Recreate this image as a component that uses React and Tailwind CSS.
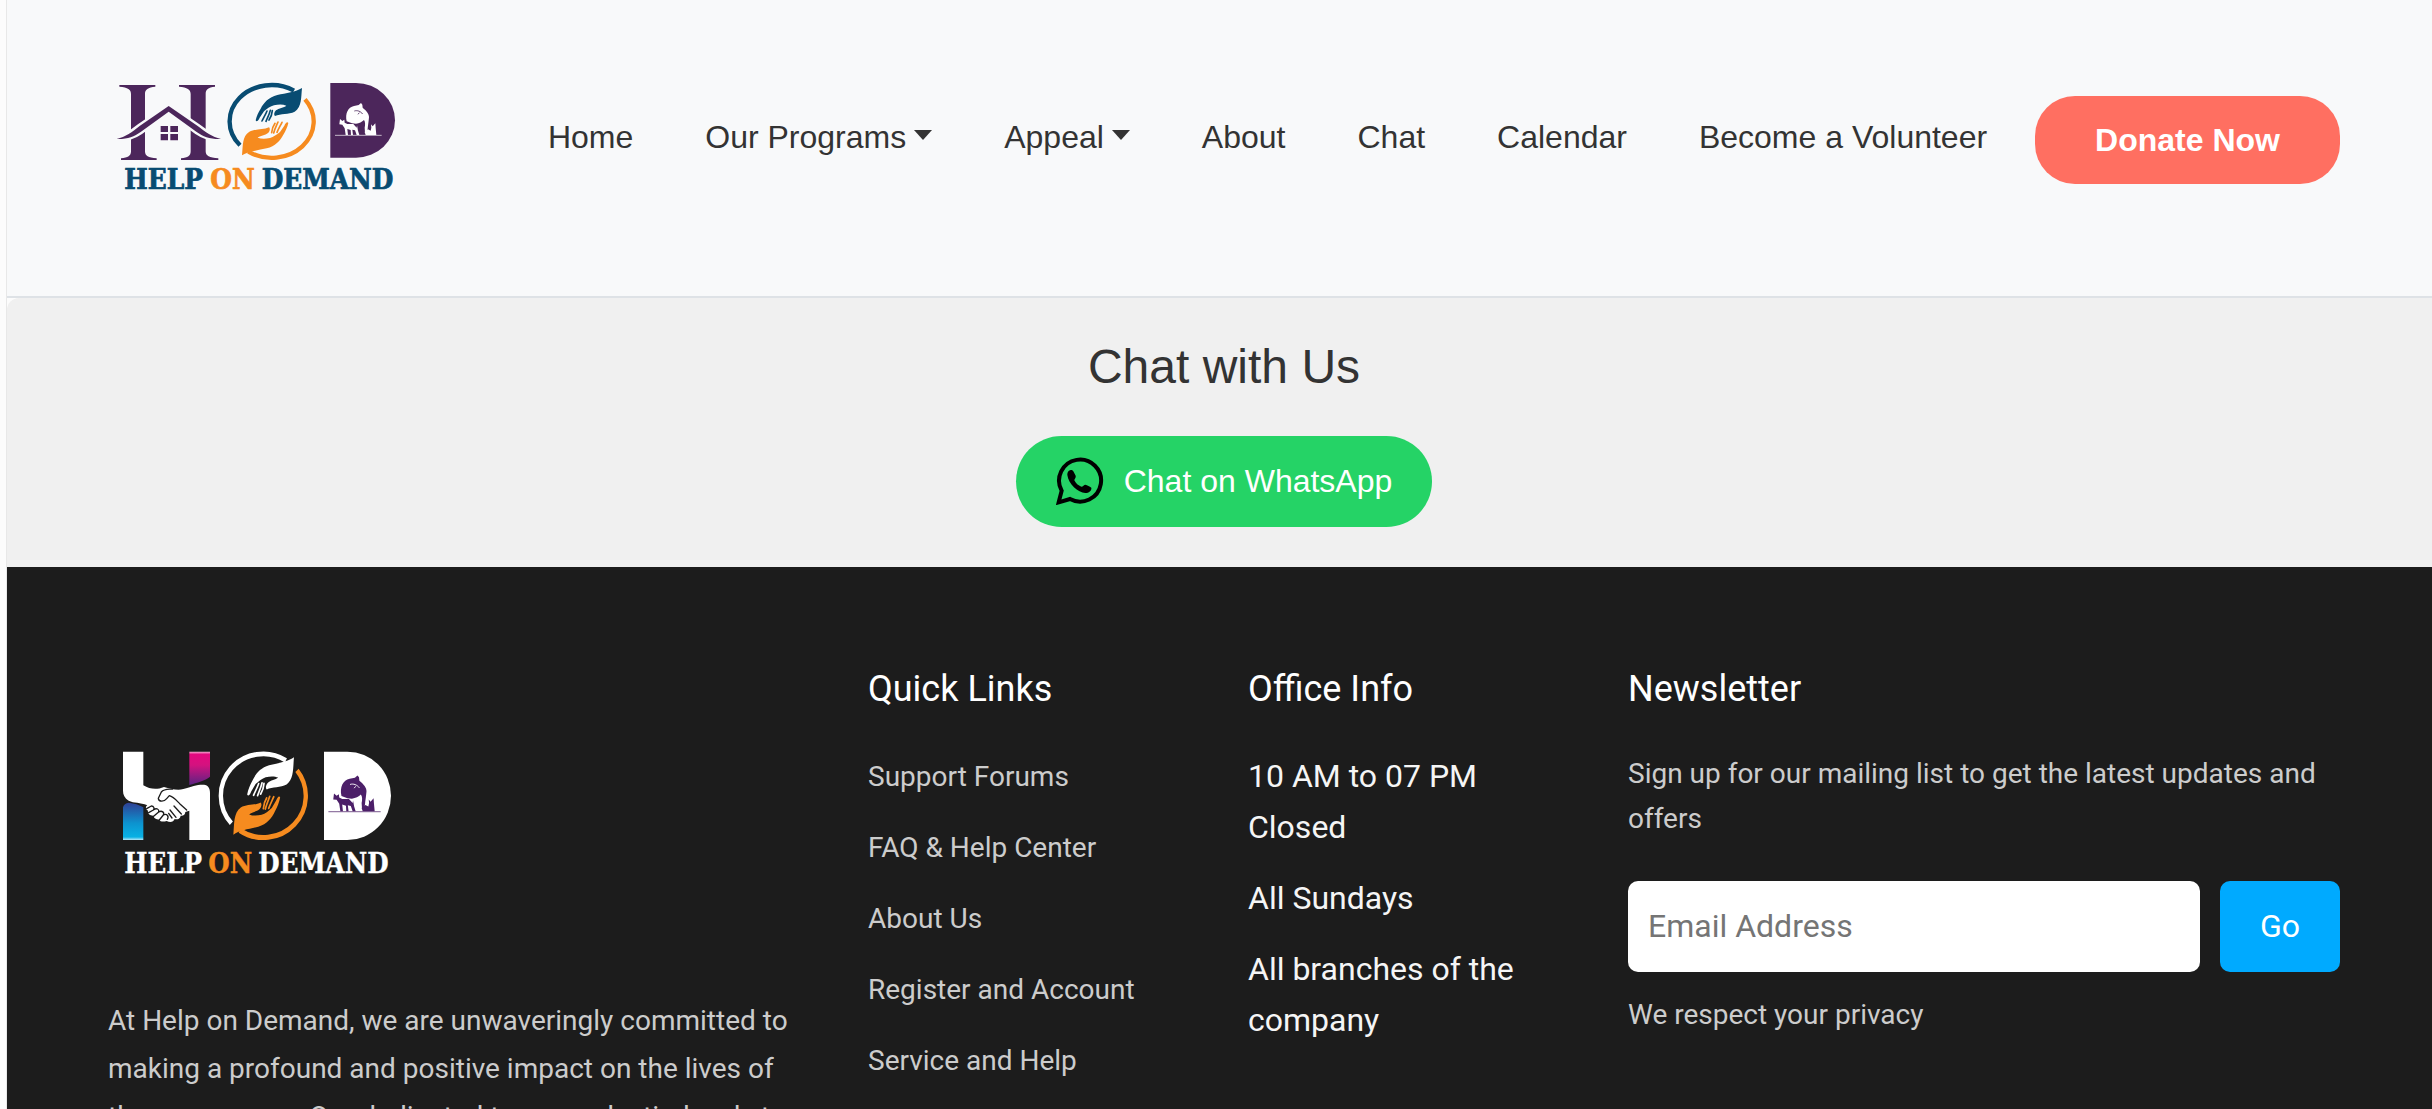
import React from "react";

const NAV_ITEMS = [
  { label: "Home" },
  { label: "Our Programs", menu: true },
  { label: "Appeal", menu: true },
  { label: "About" },
  { label: "Chat" },
  { label: "Calendar" },
  { label: "Become a Volunteer" },
];

const QUICK_LINKS = [
  "Support Forums",
  "FAQ & Help Center",
  "About Us",
  "Register and Account",
  "Service and Help",
];

const OFFICE_INFO = ["10 AM to 07 PM Closed", "All Sundays", "All branches of the company"];

function Hand({ color }) {
  return (
    <g>
      <path
        fill={color}
        d="M636 84C618 96 588 99 562 105C536 112 522 127 512 146C505 157 500 168 497 181C500 187 505 182 509 173L522 154C532 146 541 139 552 136C566 133 579 133 589 137C582 143 566 144 558 151C552 157 551 165 555 168C572 160 596 164 614 155C636 141 633 112 636 84Z"
      />
      <path
        fill="none"
        stroke={color}
        strokeWidth="5"
        strokeLinecap="round"
        d="M531 153C527 163 521 173 516 183M541 151C538 163 532 174 528 184M547 152C546 164 542 173 537 180"
      />
    </g>
  );
}

function HandsRing({ color }) {
  return (
    <g>
      <path d="M450 256A126 109 0 0 1 612 92" fill="none" stroke={color} strokeWidth="13" />
      <path d="M645 118A126 109 0 0 1 475 275" fill="none" stroke="#f68b1f" strokeWidth="13" />
      <Hand color={color} />
      <g transform="rotate(180 546 185)">
        <Hand color="#f68b1f" />
      </g>
    </g>
  );
}

function Animals({ color, detail }) {
  return (
    <g>
      <path
        fill={color}
        d="M770 184C765 160 774 142 792 138L806 135L813 129L817 134L818 143C829 152 838 162 837 172C836 184 834 196 833 206L831 218H825L824 203C826 194 826 186 822 180C816 186 808 190 798 191L786 190Z"
      />
      <path
        fill={color}
        d="M750 177L757 183L763 179L764 188L772 192H790L800 203L801 196L804 212L808 225H800L795 211L787 209L789 225H783L782 210L772 207L774 225H767L764 205L757 194L748 193ZM843 193L848 199L856 190L857 204L859 225H827L824 216L834 208L842 212L844 203Z"
      />
      <path d="M735 226H875" stroke={color} strokeWidth="2" />
      <path
        d="M793 153C802 150 812 154 818 162M808 158L804 163"
        fill="none"
        stroke={detail}
        strokeWidth="2.5"
      />
    </g>
  );
}

const WORDMARK = "font-['DejaVu_Serif_Condensed','DejaVu_Serif',serif] font-bold";

function HeaderLogo() {
  return (
    <svg viewBox="54 60 900 360" className="h-[120px] w-[300px] shrink-0" role="img" aria-label="Help on Demand">
      <g fill="#4c265b">
        <path d="M88 75H196V80C174 82 165 88 165 102V274C165 288 174 293 200 295V300H93V295C114 293 123 288 123 274V102C123 88 114 82 88 80Z" />
        <path d="M267 75H375V80C354 82 347 88 347 102V274C347 288 358 293 385 295V300H273V295C294 293 302 288 302 274V102C302 88 292 82 267 80Z" />
      </g>
      <path
        d="M236 138L322 197C347 216 366 230 393 237C360 238 340 230 320 216L236 155L152 216C132 230 112 238 80 237C107 230 126 216 150 197Z"
        fill="#4c265b"
        stroke="#f8f9fa"
        strokeWidth="14"
        paintOrder="stroke"
      />
      <path d="M212 198H234V216H212ZM241 198H264V216H241ZM212 222H234V241H212ZM241 222H264V241H241Z" fill="#4c265b" />
      <HandsRing color="#084c72" />
      <path d="M721 69H798A117 112 0 0 1 798 293H721Z" fill="#4c265b" />
      <Animals color="#ffffff" detail="#4c265b" />
      <g className={WORDMARK} fontSize="83" fill="#084c72" stroke="#084c72" strokeWidth="2">
        <text x="103" y="388">HELP</text>
        <text x="361" y="388" fill="#f68b1f" stroke="#f68b1f">ON</text>
        <text x="515" y="388">DEMAND</text>
      </g>
    </svg>
  );
}

function FooterLogo() {
  return (
    <svg viewBox="54 -189 900 870" className="mb-10 h-[290px] w-[300px]" role="img" aria-label="Help on Demand">
      <defs>
        <linearGradient id="pink" x1="0" y1="0" x2="0" y2="1">
          <stop offset="0" stopColor="#f3b3d4" />
          <stop offset="0.08" stopColor="#e5087f" />
          <stop offset="0.4" stopColor="#d4127f" />
          <stop offset="1" stopColor="#5a2382" />
        </linearGradient>
        <linearGradient id="blue" x1="0" y1="0" x2="0" y2="1">
          <stop offset="0" stopColor="#2f3f94" />
          <stop offset="0.55" stopColor="#0c93cf" />
          <stop offset="0.92" stopColor="#08b1e4" />
          <stop offset="1" stopColor="#b9e6f6" />
        </linearGradient>
      </defs>
      <path d="M298 65H360V140C345 152 322 158 298 165Z" fill="url(#pink)" />
      <path d="M99 232C101 224 107 219 116 218C132 220 148 224 160 232V330H99Z" fill="url(#blue)" />
      <path
        d="M99 65H160V166C180 178 200 180 222 171C242 176 262 182 280 177C306 169 322 163 342 164C354 165 360 174 360 190V330H298V242L286 246C286 254 280 258 272 257C270 267 262 270 254 267C250 277 240 278 230 273C218 277 210 274 208 269C198 269 190 264 191 257C180 258 172 250 174 242C166 238 166 230 172 226C150 216 132 220 116 212C104 204 99 194 99 182Z"
        fill="#ffffff"
      />
      <path
        d="M248 177C232 178 222 176 214 186L205 205C206 216 222 216 230 206L238 197C250 200 258 210 270 222L290 240M170 236L184 228C192 228 194 236 190 240L176 248M190 240C200 232 208 238 206 246L191 259M206 246C216 240 224 248 220 255L208 270M220 255C230 250 238 258 232 268M240 240L258 262M252 228L274 252M236 250L246 264"
        fill="none"
        stroke="#1c1c1c"
        strokeWidth="4"
        strokeLinecap="round"
        strokeLinejoin="round"
      />
      <g transform="translate(521 198) scale(1.01 1.15) translate(-546 -185)">
        <HandsRing color="#ffffff" />
      </g>
      <path d="M702 65H772A131 132.5 0 0 1 772 330H702Z" fill="#ffffff" />
      <g transform="translate(-108 -8) scale(1.12)">
        <Animals color="#4c1f68" detail="#ffffff" />
      </g>
      <g className={WORDMARK} fontSize="82" fill="#ffffff" stroke="#ffffff" strokeWidth="1">
        <text x="103" y="430">HELP</text>
        <text x="355" y="430" fill="#f68b1f" stroke="#f68b1f">ON</text>
        <text x="505" y="430">DEMAND</text>
      </g>
    </svg>
  );
}

function WhatsAppIcon() {
  return (
    <svg viewBox="228 410 144 144" className="size-12" aria-hidden="true">
      <path
        d="M236 546L245 511A63 63 0 1 1 270 536Z"
        fill="none"
        stroke="#000000"
        strokeWidth="12"
      />
      <path
        d="M266 452C271 447 277 448 280 453L287 466C289 471 283 476 283 480C287 489 295 496 304 499C309 499 312 493 316 493C322 494 329 498 334 502C336 511 326 518 316 518C294 517 265 491 262 464C262 459 263 455 266 452Z"
        fill="#000000"
      />
    </svg>
  );
}

function ColumnTitle({ children }) {
  return <h3 className="mb-10 text-4xl leading-11 font-normal text-white">{children}</h3>;
}

export default function App() {
  return (
    <div className="flex h-screen overflow-hidden bg-[#fcfcfc] font-['Liberation_Sans',Arial,sans-serif] text-[32px] leading-[48px] text-[#333333]">
      <div className="w-[7px] shrink-0 border-r border-[#e8e8e8]" />
      <div className="min-w-0 flex-1">
        <header className="flex items-start justify-between border-b-2 border-[#dee2e6] bg-[#f8f9fa] pt-20 pr-[92px] pb-24 pl-[101px]">
          <HeaderLogo />
          <div className="mt-4 flex gap-12">
            <nav className="pt-[17px]">
              <ul className="flex gap-[72px] whitespace-nowrap">
                {NAV_ITEMS.map((item) => (
                  <li key={item.label}>
                    <a href="#" className="flex items-center gap-2">
                      {item.label}
                      {item.menu && (
                        <svg viewBox="0 0 18 10" className="mb-1 h-[10px] w-[18px]" aria-hidden="true">
                          <path d="M0 0H18L9 10Z" fill="currentColor" />
                        </svg>
                      )}
                    </a>
                  </li>
                ))}
              </ul>
            </nav>
            <button type="button" className="rounded-[40px] bg-[#ff6f61] px-[60px] py-5 font-bold whitespace-nowrap text-white">
              Donate Now
            </button>
          </div>
        </header>

        <main className="flex flex-col items-center rounded-tl-xl bg-[#f0f0f0] py-10 pl-[9px]">
          <h1 className="mb-10 text-5xl leading-[58px]">Chat with Us</h1>
          <a href="#" className="flex h-[91px] items-center gap-5 rounded-full bg-[#25d366] px-10 pb-0.5 text-white">
            <WhatsAppIcon />
            Chat on WhatsApp
          </a>
        </main>

        <footer className="grid grid-cols-12 gap-x-12 bg-[#1c1c1c] pt-[100px] pr-[92px] pb-24 pl-[101px] font-['Roboto',sans-serif] text-[#cccccc]">
          <section className="col-span-4">
            <FooterLogo />
            <p className="text-[28px] leading-[48px]">
              At Help on Demand, we are unwaveringly committed to making a profound and positive impact on the lives of
              those we serve. Our dedicated team works tirelessly to
            </p>
          </section>

          <section className="col-span-2">
            <ColumnTitle>Quick Links</ColumnTitle>
            <ul className="flex flex-col gap-5 whitespace-nowrap">
              {QUICK_LINKS.map((label) => (
                <li key={label}>
                  <a href="#" className="block text-[28px] leading-[51px]">
                    {label}
                  </a>
                </li>
              ))}
            </ul>
          </section>

          <section className="col-span-2">
            <ColumnTitle>Office Info</ColumnTitle>
            <ul className="flex flex-col gap-5 leading-[51px] text-[#f5f5f5]">
              {OFFICE_INFO.map((line) => (
                <li key={line}>{line}</li>
              ))}
            </ul>
          </section>

          <section className="col-span-4">
            <ColumnTitle>Newsletter</ColumnTitle>
            <p className="mb-10 text-[28px] leading-[45px]">
              Sign up for our mailing list to get the latest updates and offers
            </p>
            <form className="mb-5 flex h-[91px] gap-5" onSubmit={(event) => event.preventDefault()}>
              <input
                type="email"
                aria-label="Email Address"
                placeholder="Email Address"
                className="min-w-0 flex-1 rounded-[10px] bg-white px-5 pb-0.5 text-[#333333] placeholder:text-[#757575]"
              />
              <button type="submit" className="w-[120px] rounded-[10px] bg-[#00aaff] pb-0.5 text-white">
                Go
              </button>
            </form>
            <p className="text-[28px] leading-[45px]">We respect your privacy</p>
          </section>
        </footer>
      </div>
    </div>
  );
}
